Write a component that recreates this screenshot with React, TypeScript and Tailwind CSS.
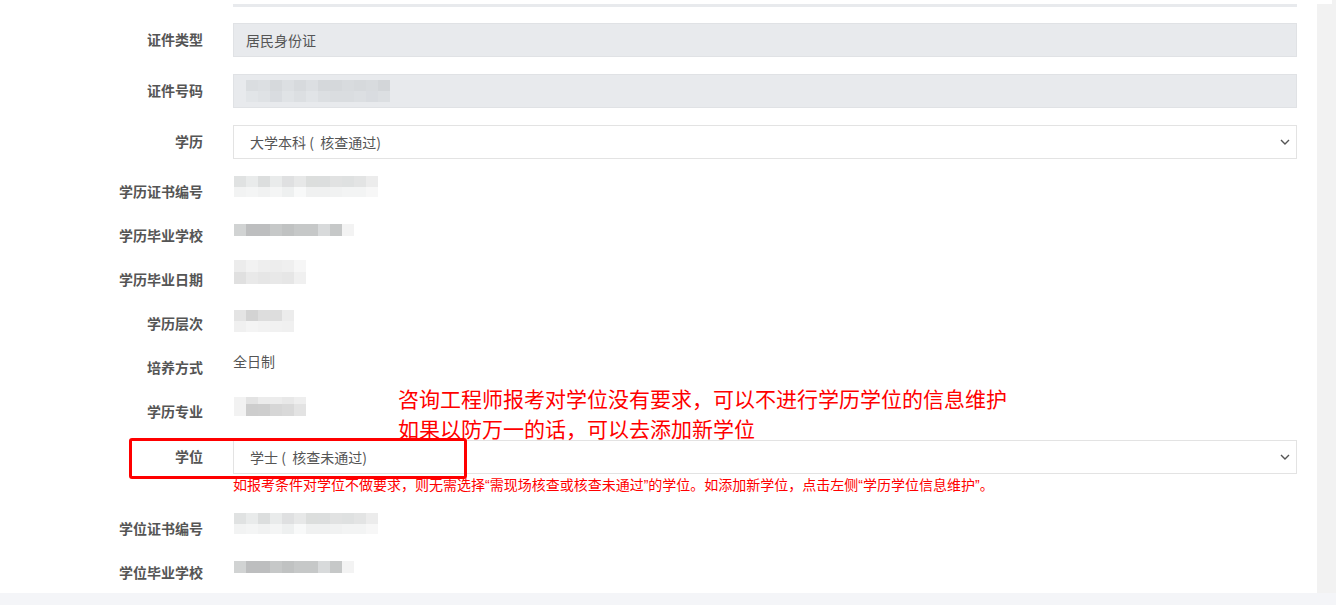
import React from "react";

const FONT = { fontFamily: '"Microsoft YaHei", "Noto Sans CJK SC", "Noto Sans", sans-serif' };

type MosaicProps = { rows: string[][]; heights: number[]; cell?: number; className?: string };

function Mosaic({ rows, heights, cell = 12, className = "" }: MosaicProps) {
  return (
    <div className={`flex flex-col ${className}`}>
      {rows.map((r, i) => (
        <div key={i} className="flex">
          {r.map((c, j) => (
            <div key={j} style={{ width: cell, height: heights[i], background: c }} />
          ))}
        </div>
      ))}
    </div>
  );
}

const certRows = [
  ["#e0e2e2", "#e9ebeb", "#dcdede", "#e9ebeb", "#dfe0e1", "#e7e8e8", "#dcdedd", "#dcdede", "#e1e2e2", "#dfe1e1", "#e3e4e4", "#ececec"],
  ["#f2f3f3", "#f4f5f5", "#f1f2f2", "#f4f5f5", "#eef0f0", "#f8f9f9", "#f0f1f1", "#f0f1f1", "#f1f2f2", "#f3f4f4", "#f3f4f4", "#f7f7f7"],
];
const schoolRows = [["#d1d3d3", "#bdbebf", "#bdbebf", "#c6c8c8", "#c0c2c2", "#c6c8c8", "#c6c8c8", "#d8dadb", "#c6c8c8", "#f3f3f3"]];
const dateRows = [
  ["#ececec", "#f2f2f2", "#eeeeee", "#ededed", "#efefef", "#f6f6f6"],
  ["#e0e0e0", "#e9e9e9", "#e6e6e6", "#e8e8e8", "#e6e6e6", "#f0f0f0"],
];
const levelRows = [
  ["#e4e4e4", "#d3d3d3", "#dddddd", "#dddddd", "#ececec"],
  ["#f0f0f0", "#f4f4f4", "#f2f2f2", "#f1f1f1", "#f0f0f0"],
];
const majorRows = [
  ["#f2f2f2", "#e3e3e3", "#ececec", "#ececec", "#e8e8e8", "#eeeeee"],
  ["#f2f2f2", "#cdcdcd", "#cecece", "#d6d6d6", "#d9d9d9", "#e3e3e3"],
];
const idRows = [
  ["#dadde0", "#dcdfe2", "#d6d9dc", "#dcdfe2", "#d7dadd", "#dcdfe2", "#d5d8db", "#d5d8db", "#d8dbde", "#d6d9dc", "#d8dbde", "#d3d6d9"],
  ["#e2e5e8", "#dfe2e5", "#d9dce0", "#e0e3e6", "#dcdfe2", "#e1e4e7", "#dcdfe2", "#dadde0", "#dadde0", "#dcdfe2", "#d9dce0", "#dcdfe2"],
];

function Label({ children }: { children: React.ReactNode }) {
  return (
    <div className="relative -top-[1px] w-[203px] shrink-0 text-right text-[14px] font-bold text-[#555]" style={FONT}>
      {children}
    </div>
  );
}

function Chevron() {
  return (
    <svg width="10" height="6" viewBox="0 0 10 6" className="absolute right-[6px] top-1/2 -translate-y-1/2">
      <path d="M1 1 L5 5 L9 1" fill="none" stroke="#555" strokeWidth="1.4" />
    </svg>
  );
}

function InputRow({ label, children, disabled, select, className = "" }: { label: string; children: React.ReactNode; disabled?: boolean; select?: boolean; className?: string }) {
  return (
    <div className={`flex items-center h-[34px] ${className}`}>
      <Label>{label}</Label>
      <div
        className={`relative ml-[30px] w-[1064px] h-[34px] border flex items-center text-[14px] text-[#555] whitespace-pre ${
          disabled ? "bg-[#e8eaed] border-[#e0e2e5] pl-[12px]" : "bg-white border-[#e3e3e3] pl-[16px]"
        }`}
        style={FONT}
      >
        {children}
        {select && <Chevron />}
      </div>
    </div>
  );
}

function TextRow({ label, children }: { label: string; children: React.ReactNode }) {
  return (
    <div className="flex h-[44px]">
      <div className="flex items-center h-[44px]">
        <Label>{label}</Label>
      </div>
      <div className="ml-[31px]">{children}</div>
    </div>
  );
}

const Q = ({ c }: { c: string }) => <span style={{ fontFamily: '"Liberation Sans", sans-serif' }}>{c}</span>;

export default function App() {
  return (
    <div className="w-[1336px] h-[605px] flex flex-col overflow-hidden bg-white" style={FONT}>
      <div className="flex h-[593px]">
        <div className="relative w-[1317px] h-full bg-white">
          <div className="h-[4px]" />
          <div className="ml-[233px] w-[1064px] h-[3px] bg-[#e8eaed]" />
          <InputRow label="证件类型" disabled className="mt-[16px]">
            居民身份证
          </InputRow>
          <InputRow label="证件号码" disabled className="mt-[17px]">
            <Mosaic rows={idRows} heights={[11, 11]} className="-mt-[1px]" />
          </InputRow>
          <InputRow label="学历" select className="mt-[17px]">
            {"大学本科 (  核查通过)"}
          </InputRow>
          <div className="h-[11px]" />
          <TextRow label="学历证书编号">
            <Mosaic rows={certRows} heights={[11, 10]} className="mt-[6px]" />
          </TextRow>
          <TextRow label="学历毕业学校">
            <Mosaic rows={schoolRows} heights={[12]} className="mt-[10px]" />
          </TextRow>
          <TextRow label="学历毕业日期">
            <Mosaic rows={dateRows} heights={[12, 12]} className="mt-[2px]" />
          </TextRow>
          <TextRow label="学历层次">
            <Mosaic rows={levelRows} heights={[11, 11]} className="mt-[8px]" />
          </TextRow>
          <TextRow label="培养方式">
            <div className="mt-[5px] text-[14px] leading-[20px] text-[#555] -ml-[1px]">全日制</div>
          </TextRow>
          <TextRow label="学历专业">
            <Mosaic rows={majorRows} heights={[7, 12]} className="mt-[7px]" />
          </TextRow>
          <InputRow label="学位" select className="mt-[6px]">
            {"学士 (  核查未通过)"}
          </InputRow>
          <div className="ml-[233px] mt-0 text-[14px] leading-[20px] text-[#ff0000] whitespace-nowrap">
            如报考条件对学位不做要求，则无需选择<Q c="“" />需现场核查或核查未通过<Q c="”" />的学位。如添加新学位，点击左侧<Q c="“" />学历学位信息维护<Q c="”" />。
          </div>
          <div className="h-[12px]" />
          <TextRow label="学位证书编号">
            <Mosaic rows={certRows} heights={[11, 10]} className="mt-[6px]" />
          </TextRow>
          <TextRow label="学位毕业学校">
            <Mosaic rows={schoolRows} heights={[12]} className="mt-[10px]" />
          </TextRow>

          <div className="absolute left-[398px] top-[383px] text-[21px] leading-[30px] text-[#ff0000] whitespace-nowrap">
            <div>咨询工程师报考对学位没有要求，可以不进行学历学位的信息维护</div>
            <div>如果以防万一的话，可以去添加新学位</div>
          </div>
          <div className="absolute left-[129px] top-[438px] w-[338px] h-[41px] border-[3px] border-[#ff0000] rounded-[3px]" />
        </div>
        <div className="flex-1 bg-[#f2f2f2] flex flex-col">
          <div className="h-[4px] w-[15px] bg-white" />
        </div>
      </div>
      <div className="h-[12px] bg-[#f4f5f8]" />
    </div>
  );
}
